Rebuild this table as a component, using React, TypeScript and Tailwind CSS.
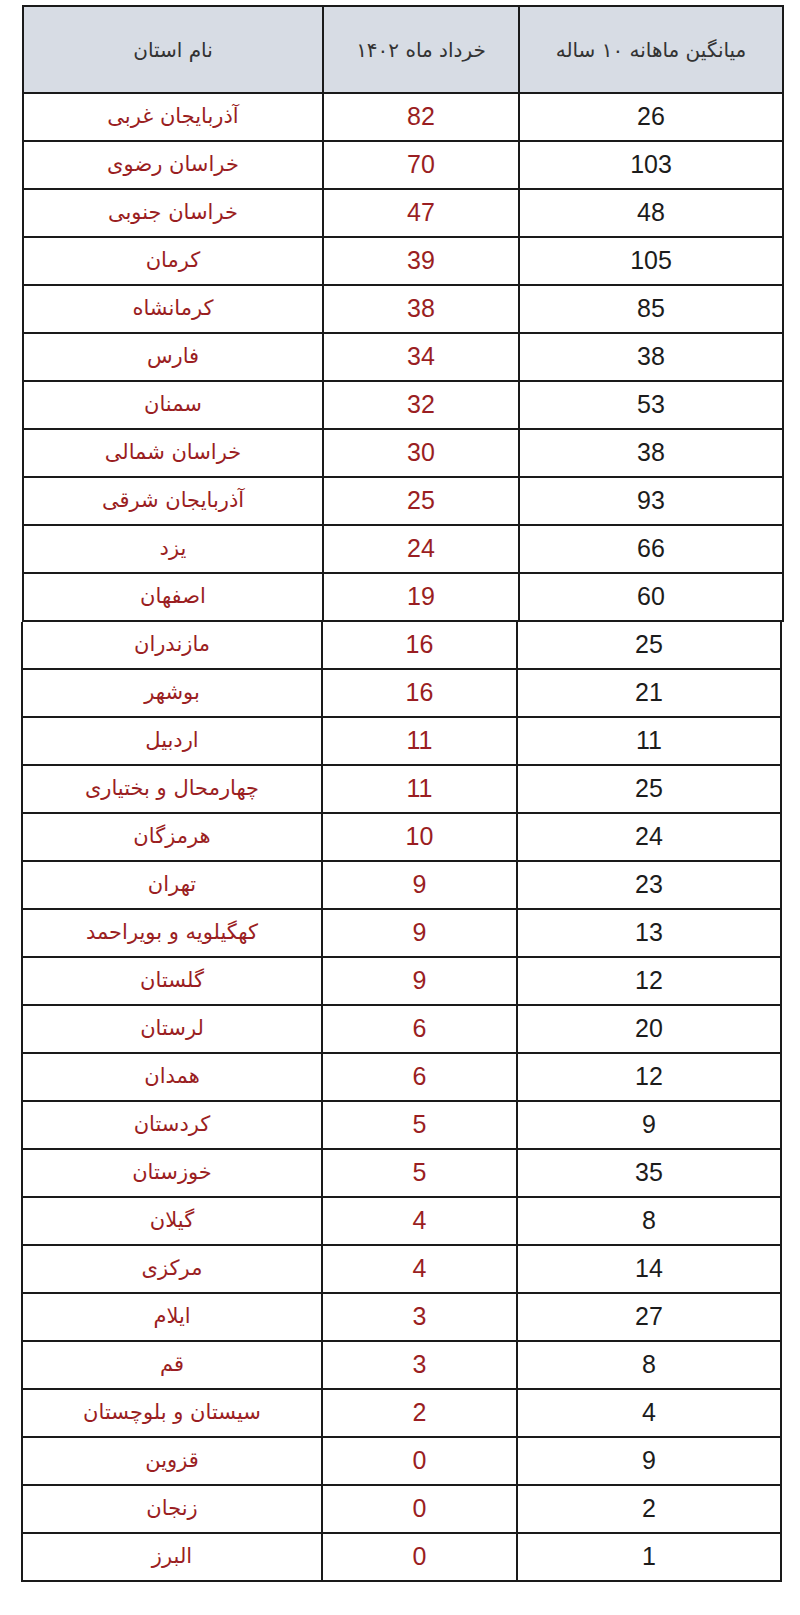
import React from "react";

type Row = { name: string; khordad: number; avg: number };

const upperRows: Row[] = [
  { name: "آذربایجان غربی", khordad: 82, avg: 26 },
  { name: "خراسان رضوی", khordad: 70, avg: 103 },
  { name: "خراسان جنوبی", khordad: 47, avg: 48 },
  { name: "کرمان", khordad: 39, avg: 105 },
  { name: "کرمانشاه", khordad: 38, avg: 85 },
  { name: "فارس", khordad: 34, avg: 38 },
  { name: "سمنان", khordad: 32, avg: 53 },
  { name: "خراسان شمالی", khordad: 30, avg: 38 },
  { name: "آذربایجان شرقی", khordad: 25, avg: 93 },
  { name: "یزد", khordad: 24, avg: 66 },
  { name: "اصفهان", khordad: 19, avg: 60 },
];

const lowerRows: Row[] = [
  { name: "مازندران", khordad: 16, avg: 25 },
  { name: "بوشهر", khordad: 16, avg: 21 },
  { name: "اردبیل", khordad: 11, avg: 11 },
  { name: "چهارمحال و بختیاری", khordad: 11, avg: 25 },
  { name: "هرمزگان", khordad: 10, avg: 24 },
  { name: "تهران", khordad: 9, avg: 23 },
  { name: "کهگیلویه و بویراحمد", khordad: 9, avg: 13 },
  { name: "گلستان", khordad: 9, avg: 12 },
  { name: "لرستان", khordad: 6, avg: 20 },
  { name: "همدان", khordad: 6, avg: 12 },
  { name: "کردستان", khordad: 5, avg: 9 },
  { name: "خوزستان", khordad: 5, avg: 35 },
  { name: "گیلان", khordad: 4, avg: 8 },
  { name: "مرکزی", khordad: 4, avg: 14 },
  { name: "ایلام", khordad: 3, avg: 27 },
  { name: "قم", khordad: 3, avg: 8 },
  { name: "سیستان و بلوچستان", khordad: 2, avg: 4 },
  { name: "قزوین", khordad: 0, avg: 9 },
  { name: "زنجان", khordad: 0, avg: 2 },
  { name: "البرز", khordad: 0, avg: 1 },
];

const faFont = "font-['DejaVu_Sans',sans-serif]";
const numFont = "font-['Liberation_Sans',Arial,sans-serif]";

function DataRow({ row, mid }: { row: Row; mid: string }) {
  return (
    <div className="flex h-[48px]">
      <div className="w-[300px] border-r-2 border-b-2 border-[#1a1a1a] flex items-center justify-center">
        <span dir="rtl" className={`${faFont} text-[21px] text-[#9a1e22] tracking-[-0.3px]`}>
          {row.name}
        </span>
      </div>
      <div className={`${mid} border-r-2 border-b-2 border-[#1a1a1a] flex items-center justify-center`}>
        <span className={`${numFont} text-[25px] text-[#9a1e22]`}>{row.khordad}</span>
      </div>
      <div className="w-[264px] border-r-2 border-b-2 border-[#1a1a1a] flex items-center justify-center">
        <span className={`${numFont} text-[25px] text-[#1c1c1c]`}>{row.avg}</span>
      </div>
    </div>
  );
}

export default function App() {
  return (
    <div className="w-[800px] h-[1615px] bg-white pt-[5px]">
      {/* upper part */}
      <div className="ml-[22px] w-[762px] border-l-2 border-t-2 border-[#1a1a1a]">
        <div className="flex h-[87px] bg-[#d7dce4]">
          <div className="w-[300px] border-r-2 border-b-2 border-[#1a1a1a] flex items-center justify-center">
            <span dir="rtl" className={`${faFont} text-[20px] text-[#333]`}>نام استان</span>
          </div>
          <div className="w-[196px] border-r-2 border-b-2 border-[#1a1a1a] flex items-center justify-center">
            <span dir="rtl" className={`${faFont} text-[20px] text-[#333]`}>خرداد ماه ۱۴۰۲</span>
          </div>
          <div className="w-[264px] border-r-2 border-b-2 border-[#1a1a1a] flex items-center justify-center">
            <span dir="rtl" className={`${faFont} text-[20px] text-[#333]`}>میانگین ماهانه ۱۰ ساله</span>
          </div>
        </div>
        {upperRows.map((r, i) => (
          <DataRow key={i} row={r} mid="w-[196px]" />
        ))}
      </div>
      {/* lower part, pasted slightly offset */}
      <div className="ml-[21px] w-[761px] border-l-2 border-[#1a1a1a]">
        {lowerRows.map((r, i) => (
          <DataRow key={i} row={r} mid="w-[195px]" />
        ))}
      </div>
    </div>
  );
}
